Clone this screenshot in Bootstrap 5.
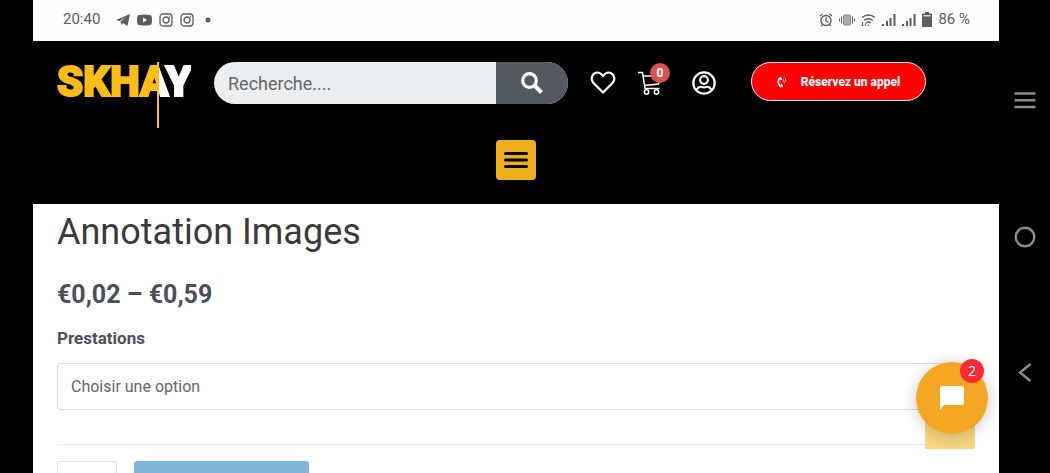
<!DOCTYPE html>
<html lang="fr">
<head>
<meta charset="utf-8">
<meta name="viewport" content="width=device-width, initial-scale=1">
<title>Annotation Images – SKHAY</title>
<link href="https://cdn.jsdelivr.net/npm/bootstrap@5.3.0/dist/css/bootstrap.min.css" rel="stylesheet">
<style>
body{font-family:Roboto,sans-serif;background:#000;color:#4b4f58}
svg{display:block;flex-shrink:0}
.edge{width:33px}
.screen{min-width:0}
.status{height:41px;background:#fefefe;color:#5c5c5c;font-size:15px;padding:0 29px 2px 30px}
.status-right{gap:6px}
.site-head{padding:21px 24px 24px}
.head-row{height:66px}
.logo{width:134px;font-size:42px;font-weight:900;line-height:40px;color:#fff;margin-right:23px}
.logo:hover{color:#fff}
.logo-text{background:linear-gradient(90deg,#fdbd14 101px,#fff 101px);-webkit-background-clip:text;background-clip:text;color:transparent;-webkit-text-stroke:2px transparent}
.logo-bar{left:100px;top:0;width:2px;height:66px;background:#fdbd14}
.search{width:354px;height:42px;border-radius:21px;overflow:hidden;background:#eceff1}
.search input{background:transparent;border:0;font-size:18px;color:#666;padding:0 14px;min-width:0}
.search input::placeholder{color:#666;opacity:1}
.search button{width:72px;border:0;background:#54595f}
.head-icons{padding:9px 0 0 22px;color:#fff}
.head-icons a{color:inherit}
.cart-count{left:12px;top:-8px;width:20px;height:20px;background:#d9534f;font-size:12px;font-weight:700;line-height:20px}
.call{width:175px;height:39px;border:1px solid #ffe5df;border-radius:20px;background:#f00;color:#fff;font-size:12px;font-weight:800;margin-left:35px;gap:13px}
.burger{width:40px;height:40px;background:#eeae1b;border:0;border-radius:4px;margin-top:12px}
.product{background:#fff;padding:5px 24px 0}
.product h1{font-size:36px;line-height:46px;font-weight:400;color:#3a3a3a;margin-bottom:24px}
.price{font-size:25px;line-height:32px;font-weight:700;margin-bottom:17px}
.opt-label{font-size:17px;line-height:20px;font-weight:700;margin-bottom:15px}
.choice{height:47px;border:1px solid #ddd;border-radius:3px;font-size:16px;color:#666;padding:0 13px;background-color:#fff}
.rule{border-top:1px solid #e6e6e6;margin:34px 0 16px}
.qty{width:60px;height:40px;border:1px solid #e2e2e2;background:#fff}
.add{width:175px;height:40px;border:0;border-radius:3px;background:#80b5d7;color:#fff}
.chat{right:11px;bottom:39px;width:72px;height:72px}
.chat-btn{width:72px;height:72px;border:0;border-radius:50%;background:#f5a623;box-shadow:0 2px 16px rgba(0,0,0,.22)}
.to-top{right:13px;bottom:-15px;width:50px;height:50px;background:#f6d680;border-radius:2px}
.chat-count{right:4px;top:-3px;width:24px;height:24px;background:#fb2c36;color:#fff;font:14px/24px "Open Sans",sans-serif}
.phone-nav{width:51px;padding:88px 0}
.phone-nav button{border:0;background:none;padding:0;color:#8c8c8c}
</style>
</head>
<body class="d-flex vh-100 overflow-hidden">
<div class="edge flex-shrink-0"></div>
<div class="screen flex-grow-1 d-flex flex-column position-relative overflow-hidden">
  <div class="status d-flex align-items-center flex-shrink-0">
    <span>20:40</span>
    <div class="d-flex align-items-center ms-3" style="gap:7px">
      <svg width="14" height="12" viewBox="0 0 14 12" fill="currentColor"><path d="M0 6 14 0 11.500 12 7 9 5.500 11 4.500 7.600 11 2.500 3.500 7z"/></svg>
      <svg width="15" height="12" viewBox="0 0 15 12" fill="currentColor"><path fill-rule="evenodd" d="M2 1Q7.500 0 13 1 15 1 15 6t-2 5Q7.500 12 2 11 0 11 0 6T2 1zm4 2.500v5L10 6z"/></svg>
      <svg width="14" height="14" viewBox="0 0 14 14" fill="none" stroke="currentColor" stroke-width="1.300"><rect x="1" y="1" width="12" height="12" rx="3"/><circle cx="7" cy="7" r="3"/><path d="M10 3.600h1"/></svg>
      <svg width="14" height="14" viewBox="0 0 14 14" fill="none" stroke="currentColor" stroke-width="1.300"><rect x="1" y="1" width="12" height="12" rx="3"/><circle cx="7" cy="7" r="3"/><path d="M10 3.600h1"/></svg>
      <svg class="ms-1" width="6" height="6" viewBox="0 0 6 6" fill="currentColor"><circle cx="3" cy="3" r="2.500"/></svg>
    </div>
    <div class="status-right d-flex align-items-center ms-auto">
      <svg width="14" height="14" viewBox="0 0 14 14" fill="none" stroke="currentColor" stroke-width="1.300"><circle cx="7" cy="7.500" r="5"/><path d="M7 4.500v3l2 2M1 3l2.500-2M13 3l-2.500-2M3.500 11.500 2 13M10.500 11.500 12 13"/></svg>
      <svg width="16" height="14" viewBox="0 0 16 14" fill="none" stroke="currentColor"><rect x="4.500" y="2" width="7" height="10" rx="1" fill="#aaa" stroke="#888"/><path d="M2.500 3.500v7M.5 5.500v3M13.500 3.500v7M15.500 5.500v3"/></svg>
      <svg width="15" height="14" viewBox="0 0 15 14" fill="none" stroke="currentColor" stroke-width="1.400"><path d="M1 4.500Q7.500-.5 14 4.500M3 7.500q4.500-3.500 9 0M5 10q2.500-2 5 0"/><circle cx="7.500" cy="12.200" r=".8" fill="currentColor" stroke="none"/><path d="M1.500 9v4M.3 11.700l1.200 1.300 1.200-1.300M4.500 13v-3" stroke-width=".9"/></svg>
      <svg width="14" height="12" viewBox="0 0 14 12" fill="currentColor"><path d="M0 10h2v2H0zM4 7h2v5H4zM7.500 4h2v8h-2zM11.500 0h2v12h-2z"/></svg>
      <svg width="14" height="12" viewBox="0 0 14 12" fill="currentColor"><path d="M0 10h2v2H0zM4 7h2v5H4zM7.500 4h2v8h-2zM11.500 0h2v12h-2z"/></svg>
      <svg width="10" height="15" viewBox="0 0 10 15"><path fill="currentColor" d="M3 0h4v1.500h2q1 0 1 1V14q0 1-1 1H1q-1 0-1-1V2.500q0-1 1-1h2z"/><path d="M1.500 3h7v1.500h-7z" fill="#ddd"/></svg>
      <span>86 %</span>
    </div>
  </div>

  <header class="site-head flex-shrink-0">
    <div class="head-row d-flex align-items-start">
      <a href="#" class="logo position-relative text-decoration-none flex-shrink-0"><span class="logo-text d-block">SKHAY</span><span class="logo-bar position-absolute"></span></a>
      <form class="search d-flex flex-shrink-0" role="search">
        <input class="flex-grow-1" type="search" placeholder="Recherche...." aria-label="Recherche">
        <button type="button" class="d-flex align-items-center justify-content-center" aria-label="Rechercher">
          <svg width="22" height="22" viewBox="0 0 22 22" fill="none" stroke="#fff"><circle cx="8.500" cy="8.500" r="6.800" stroke-width="3.200"/><path d="m13.500 13.500 7 7" stroke-width="4"/></svg>
        </button>
      </form>
      <nav class="head-icons d-flex flex-shrink-0">
        <a href="#" aria-label="Favoris"><svg width="26" height="24" viewBox="0 0 26 24" fill="none" stroke="currentColor" stroke-width="2.200" stroke-linejoin="round"><path d="M13 21.500 3.500 12C-.5 7.500 3 1.500 7.500 1.500c2.500 0 4 1.500 5.500 3.500 1.500-2 3-3.500 5.500-3.500 4.500 0 8 6 4 10.500z"/></svg></a>
        <a href="#" class="position-relative" style="margin-left:22px" aria-label="Panier"><svg width="24" height="24" viewBox="0 0 24 24" fill="none" stroke="currentColor" stroke-width="1.500"><path d="M0 1.500h4.500L7 17.500h14.500M5.500 5h17l-2 8-14 1.500"/><circle cx="8.500" cy="21" r="2.200"/><circle cx="18.500" cy="21" r="2.200"/></svg><span class="cart-count position-absolute rounded-circle text-center">0</span></a>
        <a href="#" style="margin-left:30px" aria-label="Compte"><svg width="24" height="24" viewBox="0 0 24 24" fill="none" stroke="currentColor" stroke-width="2.200"><circle cx="12" cy="12" r="10.700"/><circle cx="12" cy="9" r="3.800"/><path d="M4.500 18.500q2-3 5-2.500 2.500.7 5 0 3-.5 5 2.500"/></svg></a>
      </nav>
      <button type="button" class="call d-flex align-items-center justify-content-center flex-shrink-0 p-0">
        <svg width="11" height="12" viewBox="0 0 11 12" fill="none" stroke="currentColor"><path d="M4 1.500Q1 2.500 1.300 6T4.500 11" stroke-width="1.600"/><path d="m2.500 2.200 2-1 .5 2.500-1.500.5zM3.300 8.300l1.500-.5L6.300 10l-1.500 1.500z" fill="currentColor" stroke="none"/><path d="M6 3.200q1.500 1.300 0 2.600M7 1.500q3.500 2.700 0 5.500" stroke-width=".9"/></svg>
        Réservez un appel
      </button>
    </div>
    <button type="button" class="burger d-flex align-items-center justify-content-center mx-auto p-0" aria-label="Menu">
      <svg width="24" height="18" viewBox="0 0 24 18" stroke="#000" stroke-width="3" stroke-linecap="round"><path d="M1.500 2.500h21M1.500 9h21M1.500 15.500h21"/></svg>
    </button>
  </header>

  <main class="product flex-grow-1 overflow-hidden">
    <h1>Annotation Images</h1>
    <p class="price">€0,02 – €0,59</p>
    <label class="opt-label d-block" for="prestations">Prestations</label>
    <select id="prestations" class="form-select choice"><option>Choisir une option</option></select>
    <div class="rule"></div>
    <div class="d-flex" style="gap:17px">
      <input type="text" class="qty" aria-label="Quantité">
      <button type="button" class="add" aria-label="Ajouter au panier"></button>
    </div>
  </main>

  <div class="chat position-absolute">
    <a href="#" class="to-top position-absolute" aria-label="Haut de page"></a>
    <button type="button" class="chat-btn position-relative d-flex align-items-center justify-content-center p-0" aria-label="Discussion">
      <svg width="24" height="24" viewBox="0 0 24 24" fill="#fff"><path d="M2 0h20q2 0 2 2v15q0 2-2 2H4l-4 5V2q0-2 2-2z"/></svg>
    </button>
    <span class="chat-count position-absolute rounded-circle text-center">2</span>
  </div>
</div>

<nav class="phone-nav d-flex flex-column align-items-center justify-content-between flex-shrink-0" aria-label="Système">
  <button type="button" aria-label="Applications récentes"><svg width="24" height="24" viewBox="0 0 24 24" stroke="currentColor" stroke-width="2.400"><path d="M1.500 5.500h21M1.500 12.200h21M1.500 19h21"/></svg></button>
  <button type="button" aria-label="Accueil"><svg width="24" height="24" viewBox="0 0 24 24" fill="none" stroke="currentColor" stroke-width="2.400"><circle cx="12" cy="12" r="9.300"/></svg></button>
  <button type="button" aria-label="Retour"><svg width="24" height="24" viewBox="0 0 24 24" fill="none" stroke="currentColor" stroke-width="2.400"><path d="M17.500 3 7 11.500 17.500 20"/></svg></button>
</nav>
<script src="https://cdn.jsdelivr.net/npm/bootstrap@5.3.0/dist/js/bootstrap.bundle.min.js"></script>
</body>
</html>
